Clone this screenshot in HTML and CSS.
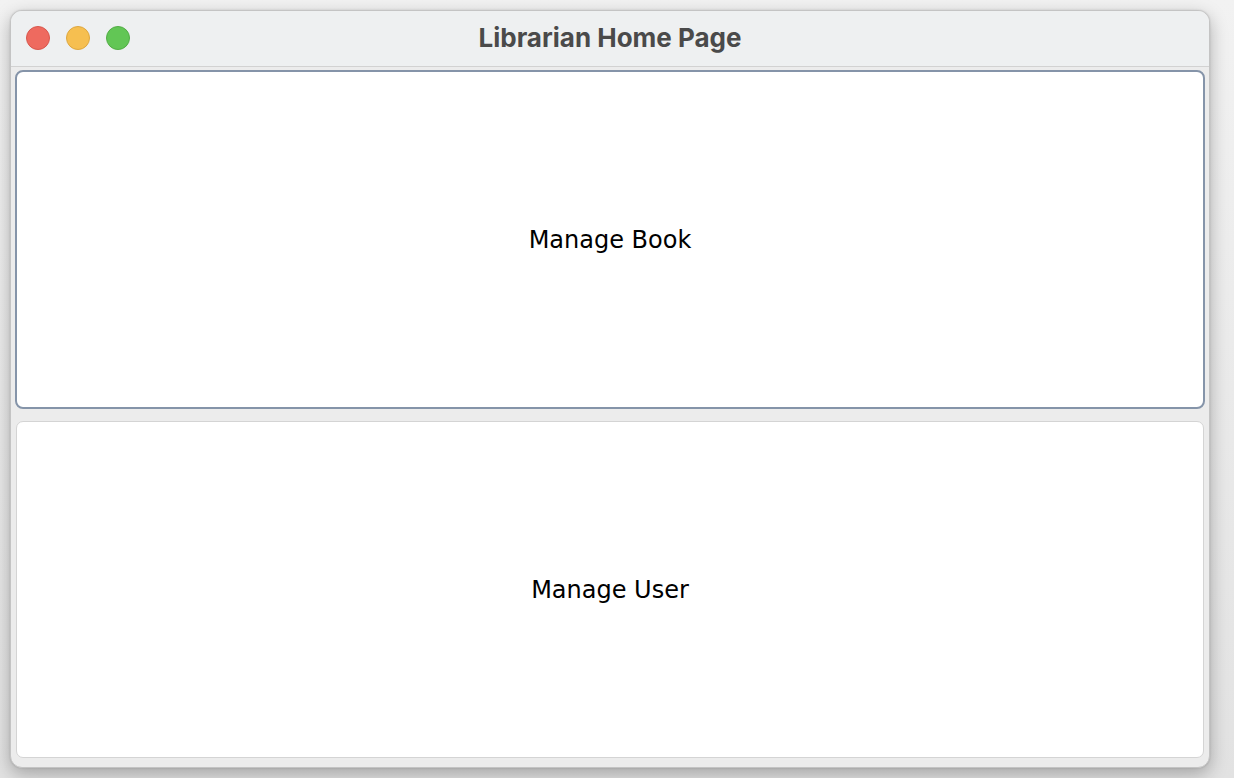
FILE: index.html
```html
<!DOCTYPE html>
<html>
<head>
<meta charset="utf-8">
<title>Librarian Home Page</title>
<link rel="stylesheet" href="styles.css">
</head>
<body>
<div class="window">
  <div class="titlebar">
    <div class="lights">
      <span class="light red"></span>
      <span class="light yellow"></span>
      <span class="light green"></span>
    </div>
    <div class="title">Librarian Home Page</div>
  </div>
  <div class="content">
    <button class="btn focused">Manage Book</button>
    <button class="btn">Manage User</button>
  </div>
</div>
</body>
</html>
```
FILE: styles.css
```css
html, body {
  margin: 0;
  padding: 0;
}
body {
  width: 1234px;
  height: 778px;
  overflow: hidden;
  background: linear-gradient(#f2f2f2, #e2e2e2);
  padding: 10px;
  box-sizing: border-box;
}
.window {
  width: 1200px;
  height: 758px;
  box-sizing: border-box;
  border: 1px solid #c4c4c4;
  border-radius: 12px;
  background: #ececec;
  box-shadow: 0 6px 18px rgba(0,0,0,0.28), 0 0 2px rgba(0,0,0,0.15);
  display: flex;
  flex-direction: column;
  overflow: hidden;
}
.titlebar {
  height: 55px;
  flex: none;
  background: #eef0f1;
  border-bottom: 1px solid #d2d2d2;
  position: relative;
  display: flex;
  align-items: center;
  justify-content: center;
}
.lights {
  position: absolute;
  left: 15px;
  top: 15px;
  display: flex;
  gap: 16px;
}
.light {
  width: 24px;
  height: 24px;
  border-radius: 50%;
  box-sizing: border-box;
}
.red { background: #ee6a5f; border: 1px solid #d8574d; }
.yellow { background: #f6bf50; border: 1px solid #dea73f; }
.green { background: #62c655; border: 1px solid #52ad45; }
.title {
  font-family: "Inter", "Liberation Sans", sans-serif;
  font-weight: 700;
  font-size: 26px;
  color: #4a4a4a;
  margin-top: -2px;
}
.content {
  flex: 1;
  display: flex;
  flex-direction: column;
  gap: 12px;
  padding: 3px 4px 9px 4px;
}
.btn {
  flex: 1;
  margin: 0 1px;
  background: #ffffff;
  border: 1px solid #d4d4d4;
  border-radius: 7px;
  font-family: "DejaVu Sans", "Verdana", sans-serif;
  font-size: 24px;
  color: #000;
  padding: 0;
}
.btn.focused {
  margin: 0;
  border: 2px solid #8594a9;
  border-radius: 8px;
}
```
